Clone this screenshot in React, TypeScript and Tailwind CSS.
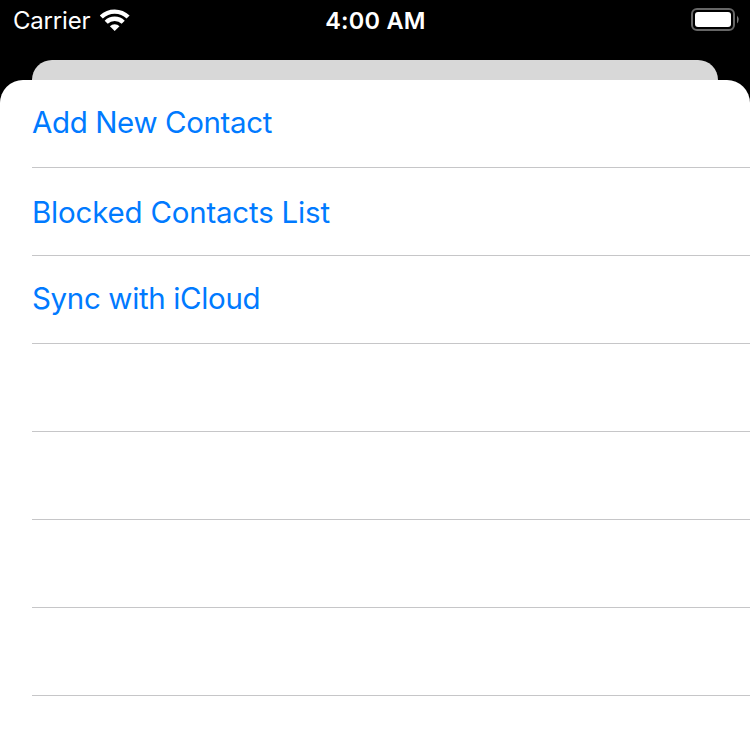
const rows = [
  { label: 'Add New Contact', cls: 'pt-[23px] tracking-[-0.38px]' },
  { label: 'Blocked Contacts List', cls: 'pt-[25px] tracking-[-0.21px]' },
  { label: 'Sync with iCloud', cls: 'pt-[23px] tracking-[-0.35px]' },
  { label: '', cls: '' },
  { label: '', cls: '' },
  { label: '', cls: '' },
  { label: '', cls: '' },
];

export default function App() {
  return (
    <div className="flex h-[729px] w-[750px] flex-col overflow-hidden bg-black font-['Inter',sans-serif]">
      <header className="grid h-[60px] shrink-0 grid-cols-3 items-start text-white">
        <div className="flex items-start gap-[10px] pl-[13px] pt-[5px]">
          <span className="w-[77px] text-[24px] leading-[32px] tracking-[-0.2px]">Carrier</span>
          <svg className="mt-1" width="30" height="22" viewBox="0 0 30 22" fill="none" stroke="white" strokeWidth="4.4">
            <path d="M1.3 8 A19.3 19.3 0 0 1 28.1 8" />
            <path d="M6.2 13.3 A12 12 0 0 1 23.2 13.3" />
            <path d="M9.9 17.2 A6.8 6.8 0 0 1 19.5 17.2 L14.7 22 Z" fill="white" stroke="none" />
          </svg>
        </div>
        <div className="pl-[1px] pt-[5px] text-center text-[23.5px] font-semibold leading-[32px] tracking-[0.25px]">4:00 AM</div>
        <div className="flex justify-end pr-[11px] pt-[8px]">
          <svg width="48" height="23" viewBox="0 0 48 23" fill="none">
            <rect x="1" y="1" width="42" height="21" rx="5" stroke="#666" strokeWidth="2" />
            <rect x="4" y="4" width="36" height="15" rx="3" fill="white" />
            <path d="M46 7.5 Q49.4 11.5 46 15.5 Z" fill="#777" />
          </svg>
        </div>
      </header>
      <div className="mx-8 h-5 shrink-0 rounded-t-[20px] bg-[#d8d8d8]" />
      <main className="flex-1 rounded-t-[23px] bg-white pl-8">
        {rows.map((r, i) => (
          <div key={i} className="h-[88px] border-b border-[#c6c6c8] text-[29.5px] leading-[38px] text-[#007aff]">
            <div className={r.cls}>{r.label}</div>
          </div>
        ))}
      </main>
    </div>
  );
}
